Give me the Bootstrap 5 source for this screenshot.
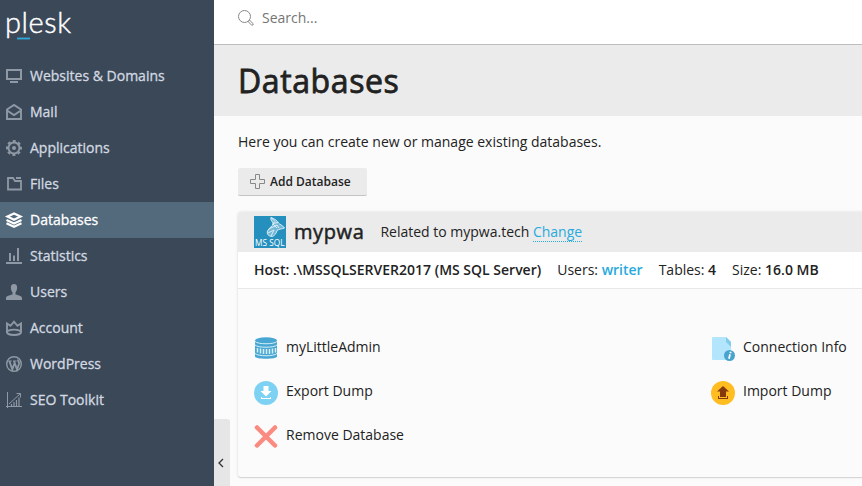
<!DOCTYPE html>
<html lang="en">
<head>
<meta charset="utf-8">
<meta name="viewport" content="width=device-width, initial-scale=1">
<title>Databases - Plesk</title>
<link href="https://cdn.jsdelivr.net/npm/bootstrap@5.3.0/dist/css/bootstrap.min.css" rel="stylesheet">
<style>
body{font-family:"Open Sans",sans-serif;font-size:14px;line-height:20px;color:#222;background:#fbfbfb}
svg{display:block;flex:none;overflow:visible}
a{color:#28aade;text-decoration:none}
.app-shell{height:486px}
.side{width:214px;background:#3a4858}
.brand{font-family:Lato,sans-serif;font-weight:300;font-size:29px;letter-spacing:.6px;line-height:36px;height:58px;padding:4px 0 0 5px;color:#fff;-webkit-text-stroke:.45px #fff}
.brand-line{left:17px;top:37px;width:13px;height:3px;background:#28aade;border:solid #3a6f8c;border-width:1px 0}
.side .nav-link{height:36px;padding:0 6px;gap:8px;color:#d3d9e0;-webkit-text-stroke:.3px currentColor}
.side .nav-link svg{color:#8f99a5}
.side .nav-link.active{background:#53697c;color:#fff}
.side .nav-link.active svg{color:#fff}
.search-bar{height:45px;border-bottom:1px solid #bdbdbd;padding:0 24px 9px;color:#757575;background:#fff}
.title-band{height:71px;background:#ebebeb;padding:0 24px}
.title-band h1{font-size:32px;line-height:40px;font-weight:400;letter-spacing:.6px;-webkit-text-stroke:.8px #222;color:#222}
.content-area{padding:16px 0 0 24px}
.btn-add{height:28px;padding:0 16px 0 12px;background:#ebebeb;border:0;border-bottom:1px solid #c4c4c4;border-radius:2px;font-size:12px;font-weight:600;color:#222;gap:5px}
.db-card{width:920px;height:265px;background:#fbfbfb;border-radius:3px;box-shadow:0 0 3px rgba(0,0,0,.12),0 1px 1px rgba(0,0,0,.12)}
.db-head{height:40px;background:#ebebeb;padding:0 16px}
.db-name{font-size:20px;line-height:28px;letter-spacing:.6px;-webkit-text-stroke:.5px #222}
.change-link{border-bottom:1px dotted #28aade;line-height:19px}
.db-info{height:37px;background:#fff;border-bottom:1px solid #e8e8e8;padding:0 16px;gap:16px}
.db-info b{font-weight:600}
.actions{padding:38px 16px 0}
.action-col{width:457px}
.action-item{height:44px;gap:8px}
.action-item span{padding-bottom:4px}
.collapse-tab{left:214px;top:419px;width:16px;height:67px;background:#e6e6e6;border-radius:0 3px 0 0}
</style>
<script src="https://cdn.jsdelivr.net/npm/bootstrap@5.3.0/dist/js/bootstrap.bundle.min.js"></script>
</head>
<body class="overflow-hidden">
<div class="app-shell d-flex position-relative overflow-hidden">
  <aside class="side flex-shrink-0">
    <div class="brand position-relative">plesk<span class="brand-line position-absolute"></span></div>
    <nav class="nav flex-column flex-nowrap">
      <a class="nav-link d-flex align-items-center" href="#"><svg width="16" height="16" fill="none" stroke="currentColor" stroke-width="2"><path d="M1 2h14v9H1zM4 14h8"/></svg>Websites &amp; Domains</a>
      <a class="nav-link d-flex align-items-center" href="#"><svg width="16" height="16" fill="none" stroke="currentColor" stroke-width="1.900"><path d="M1 15V5.500L8 1l7 4.500V15zM1 6.500l7 4.500 7-4.500"/></svg>Mail</a>
      <a class="nav-link d-flex align-items-center" href="#"><svg width="16" height="16" fill="none" stroke="currentColor"><circle cx="8" cy="8" r="5.500" stroke-width="2"/><circle cx="8" cy="8" r="7" stroke-width="2" stroke-dasharray="3 2.498" stroke-dashoffset="1.500"/><circle cx="8" cy="8" r="2" fill="currentColor" stroke="none"/></svg>Applications</a>
      <a class="nav-link d-flex align-items-center" href="#"><svg width="16" height="16" fill="none" stroke="currentColor" stroke-width="1.800"><path d="M2 2h5l2 3h6v8.500H2zM10 2h5"/></svg>Files</a>
      <a class="nav-link d-flex align-items-center active" href="#"><svg width="16" height="16" fill="none" stroke="currentColor" stroke-width="2.200"><path d="M1.500 4.600 8 1.500l6.500 3.100L8 7.700zM.5 8 8 11.500 15.500 8M.5 11.300 8 14.800l7.500-3.500"/></svg>Databases</a>
      <a class="nav-link d-flex align-items-center" href="#"><svg width="16" height="16" fill="none" stroke="currentColor"><path d="M0 15h16" stroke-width="2"/><path d="M4 5v8M8 7.500V13M12 0v13" stroke-width="2"/></svg>Statistics</a>
      <a class="nav-link d-flex align-items-center" href="#"><svg width="16" height="16" fill="currentColor"><path d="M8 0C5.800 0 4.800 1.600 4.900 4c.1 2 .7 3.200 1.600 4.200v2.300C3 11.500 0 12 0 14.200V16h16v-1.800c0-2.200-3-2.700-6.500-3.700V8.200c.9-1 1.500-2.200 1.600-4.200C11.200 1.600 10.200 0 8 0z"/></svg>Users</a>
      <a class="nav-link d-flex align-items-center" href="#"><svg width="16" height="16" fill="none" stroke="currentColor" stroke-width="1.900"><path d="M1 12.500V3.500l3.500 2.300L8 1.700l3.500 4.100L15 3.500v9"/><ellipse cx="8" cy="12.300" rx="7" ry="2.700"/></svg>Account</a>
      <a class="nav-link d-flex align-items-center" href="#"><svg width="16" height="16" fill="none" stroke="currentColor"><circle cx="8" cy="8" r="7.300" stroke-width="1.400"/><path d="M2.200 5h3.600M7 5h3.600" stroke-width="1"/><path d="M3.300 5l3 8.500L8.600 7M8 5l3 8.500 2-5.500c.6-2-1.300-2.500-.8-4.500" stroke-width="1.900"/></svg>WordPress</a>
      <a class="nav-link d-flex align-items-center" href="#"><svg width="16" height="16" fill="none" stroke="currentColor"><path d="M1.500 0v16M0 14.500h16M3 12l11-10M10.500 1.500h4v4"/><path d="M5.500 12v2M8 10v4M10.500 8v6M13 5.500V14" stroke-width="1.200"/></svg>SEO Toolkit</a>
    </nav>
  </aside>
  <main class="flex-grow-1 overflow-hidden">
    <div class="search-bar d-flex align-items-center gap-2"><svg width="16" height="16" fill="none" stroke="#888"><circle cx="6.500" cy="6.500" r="6"/><path d="M10.300 11.700l1.400-1.400 3.600 3.500q.3 1.300-1.500 1.500z"/></svg><span>Search...</span></div>
    <header class="title-band d-flex align-items-center"><h1 class="m-0">Databases</h1></header>
    <section class="content-area">
      <p class="mb-3">Here you can create new or manage existing databases.</p>
      <button class="btn btn-add d-flex align-items-center" type="button"><svg width="15" height="15" fill="none" stroke="#888"><path d="M5.500.5h4v5h5v4h-5v5h-4v-5h-5v-4h5z"/></svg>Add Database</button>
      <article class="db-card mt-3 overflow-hidden">
        <header class="db-head d-flex align-items-center">
          <svg width="32" height="32"><path fill="#258fbe" d="M0 0h32v32H0z"/><g fill="none" stroke="#e6f4fa" stroke-width=".9"><path d="M17 1.500c-1 3 2 4 2 6 0 3-4 4-5.500 7.500-1 3 1 5.500 5 5.500 2-1 4-3 4.500-6 2-1.500 5-1.500 7.500-2.500-2-3-5-3.500-6-5-1-2-4-4.500-7.500-5.500z" fill="#e6f4fa" fill-opacity=".4"/><path d="M17 1.500l4 4-2 2 5-1M19 8l4 4M15 13l8-4 2 3M14 17l6-3-3 6"/></g><text x="1" y="30.300" font-size="9.500" fill="#fff" textLength="29.500" lengthAdjust="spacingAndGlyphs">MS SQL</text></svg>
          <span class="db-name ms-2">mypwa</span>
          <span class="ms-3">Related to mypwa.tech <a class="change-link d-inline-block" href="#">Change</a></span>
        </header>
        <div class="db-info d-flex align-items-center text-nowrap"><b>Host: .\MSSQLSERVER2017 (MS SQL Server)</b><span>Users: <a href="#"><b>writer</b></a></span><span>Tables: <b>4</b></span><span>Size: <b>16.0 MB</b></span></div>
        <div class="actions d-flex">
          <div class="action-col flex-shrink-0">
            <div class="action-item d-flex align-items-center"><svg width="24" height="24"><path fill="#48a7d2" d="M1 3.500v16c0 3 22 3 22 0v-16z"/><ellipse cx="12" cy="3.500" rx="11" ry="3.300" fill="#48a7d2"/><path d="M1 4.500c3 3 19 3 22 0M1 8c3 3 19 3 22 0M1 16.500c3 3 19 3 22 0" fill="none" stroke="#d5eff9"/><path d="M3.500 11v4.500M6.500 11.500v5M9.500 12v5M12.500 12v5M15.500 12v5M18.500 11.500v5M21.500 11v4.500" stroke="#d5eff9" stroke-width="1.500"/></svg><span>myLittleAdmin</span></div>
            <div class="action-item d-flex align-items-center"><svg width="24" height="24"><circle cx="12" cy="12" r="12" fill="#7dd1f2"/><path fill="#fff" d="M9.500 5h5v5h3L12 15.500 6.500 10h3zM7 16h1v1h8v-1h1v2H7z"/></svg><span>Export Dump</span></div>
            <div class="action-item d-flex align-items-center"><svg width="24" height="24"><path d="M3 2.500l18 18M21 2.500L3 20.500" stroke="#fb8b80" stroke-width="4.500" stroke-linecap="round"/></svg><span>Remove Database</span></div>
          </div>
          <div class="action-col flex-shrink-0">
            <div class="action-item d-flex align-items-center"><svg width="24" height="24"><path fill="#b3e6fc" d="M2 0h13l5 5v18H2q-1 0-1-1V1q0-1 1-1z"/><path fill="#82cbea" d="M15 0v5l5 5V5z"/><circle cx="18.500" cy="18.500" r="5.500" fill="#48a3cf"/><path d="M19.700 14.700l-.3 1.500M19 17.200l-1 4.500" stroke="#fff" stroke-width="1.800"/></svg><span>Connection Info</span></div>
            <div class="action-item d-flex align-items-center"><svg width="24" height="24"><circle cx="12" cy="12" r="12" fill="#ffbd22"/><path fill="#843a0a" d="M12 5l6 5.500h-3V16H9v-5.500H6zM7 15h1v2h8v-2h1v3H7z"/></svg><span>Import Dump</span></div>
          </div>
        </div>
      </article>
    </section>
  </main>
  <div class="collapse-tab position-absolute"><svg width="16" height="67" fill="none" stroke="#333" stroke-width="1.300"><path d="M9 40l-4 4 4 4"/></svg></div>
</div>
</body>
</html>
